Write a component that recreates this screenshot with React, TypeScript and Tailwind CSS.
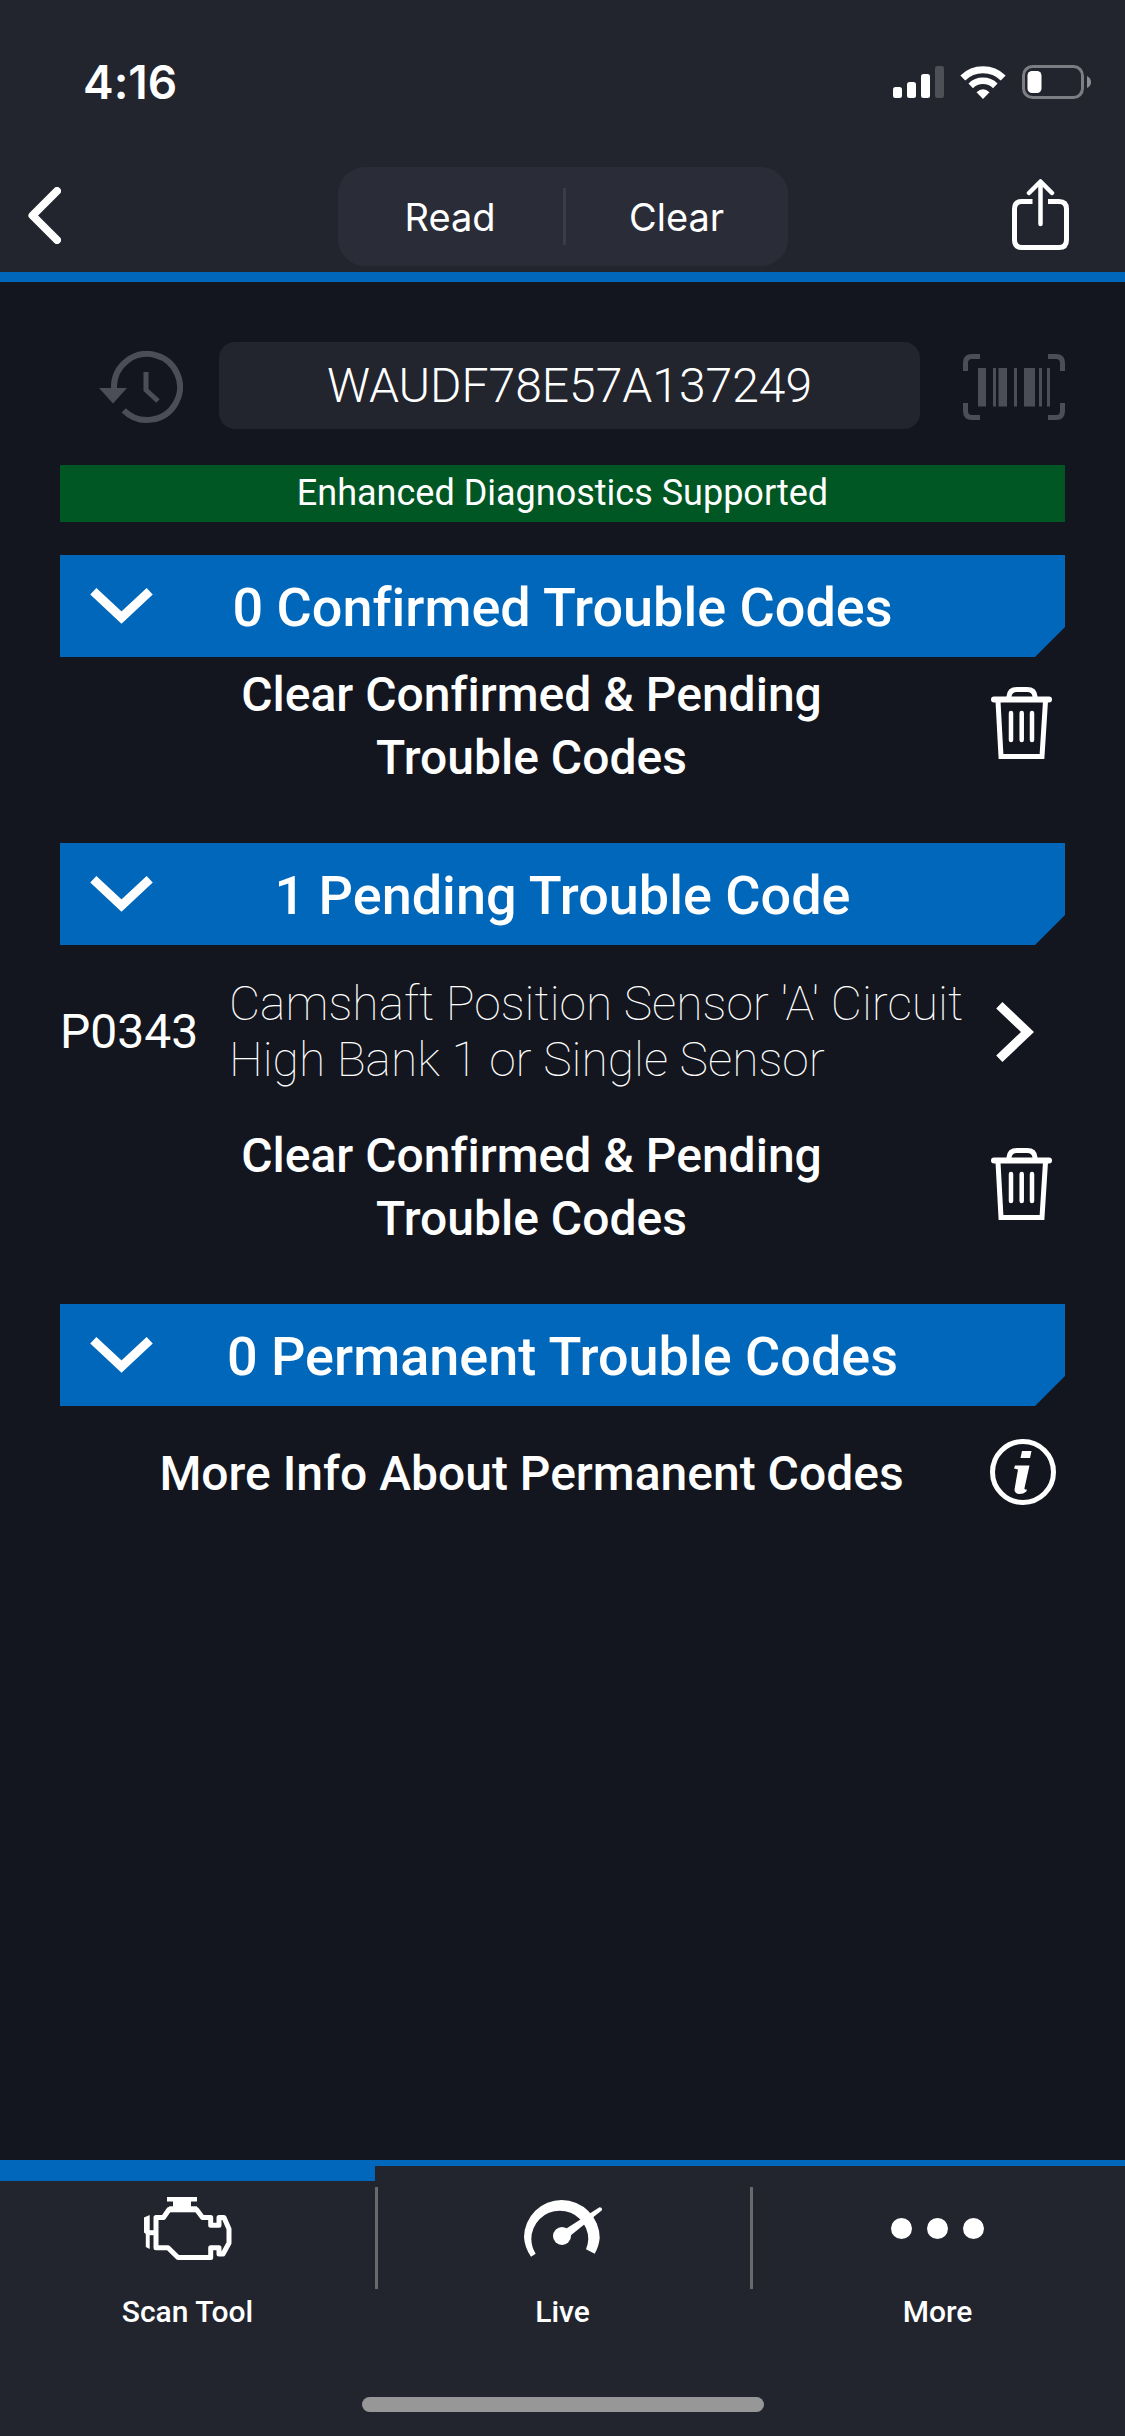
import { useState } from 'react';
import type { ReactNode } from 'react';

const TABS = [
  { id: 'scan', label: 'Scan Tool', icon: <EngineIcon /> },
  { id: 'live', label: 'Live', icon: <GaugeIcon /> },
  { id: 'more', label: 'More', icon: <DotsIcon /> },
];

function EngineIcon() {
  return (
    <svg className="w-[88px] h-[63px]" viewBox="0 0 88 63" fill="none" stroke="currentColor" strokeWidth="5" strokeLinejoin="round">
      <path d="M23 0h30v4.5h-6V11H29V4.5h-6zM0 20.5 5.7 18v34l-3.9-2V37L0 35.5z" fill="currentColor" stroke="none" />
      <path d="M5 35.7h6" />
      <path d="M12 20.5h7.5L25 12.5h27.5L58.5 20.5h8.2v7.7H75V20.5h5L85 32v14l-6 11h-4v-6.3h-8.3v9.8H34L24 50.7H12z" />
      <path d="M25 12.3h28" strokeWidth="6" />
    </svg>
  );
}

function GaugeIcon() {
  return (
    <svg className="w-[78px] h-[57px]" viewBox="0 0 78 57" fill="currentColor">
      <path d="M7 56.7A37.7 37.7 0 0 1 0 37A37.7 37.7 0 0 1 37.7 0A38 38 0 0 1 75.7 38A38 38 0 0 1 70.7 53.7L62 49.3A28.5 28.5 0 0 0 64.3 39A28.5 28.5 0 0 0 35.8 10.7A28.5 28.5 0 0 0 7.3 39A28.5 28.5 0 0 0 11.7 53.7Z" />
      <circle cx="38" cy="36" r="9" />
      <path d="M40 30 75.5 7.3Q79 7.5 77.6 10.5L46 36Z" />
    </svg>
  );
}

function DotsIcon() {
  return (
    <svg className="w-[93px] h-[21px]" viewBox="0 0 93 21" fill="currentColor">
      <circle cx="10.5" cy="10.5" r="10.5" />
      <circle cx="46.5" cy="10.5" r="10.5" />
      <circle cx="82.5" cy="10.5" r="10.5" />
    </svg>
  );
}

function TrashIcon() {
  return (
    <svg className="w-[66px] h-[78px] shrink-0" viewBox="0 0 66 78" fill="none" stroke="currentColor" strokeWidth="5">
      <path d="M19 11V9.5Q19.5 2.5 27 2.5h10q7.500 0 8 7V11" />
      <path d="M4 12.500h55" strokeWidth="6" strokeLinecap="round" />
      <path d="M8 14 11 69.500h41L55.500 14" />
      <path d="M21 26v27M31.700 26v27M42 26v27" strokeWidth="4.500" strokeLinecap="round" />
    </svg>
  );
}

function InfoIcon() {
  return (
    <svg className="w-[66px] h-[68px] shrink-0" viewBox="0 0 66 68">
      <circle cx="33" cy="33" r="30.500" fill="none" stroke="currentColor" strokeWidth="5" />
      <path d="M32 12h9.500l-1.500 7h-9.500zM25 26.500h14.500l-5 22.500q-.3 2 1.500 1.500l.8-.2-.4 2.200q-3 2.500-7 2.500-5.300-.5-4.800-5L28 30.500l-4-1z" fill="currentColor" />
    </svg>
  );
}

function StatusBar() {
  return (
    <div className="flex items-center justify-between h-[134px] pt-[30px] pl-[83px] pr-[34px]">
      <span className="font-[Inter,sans-serif] text-[46px] leading-[54px] font-semibold">4:16</span>
      <div className="flex items-center gap-4">
        <svg className="w-[51px] h-8" viewBox="0 0 51 32" fill="currentColor">
          <rect x="0" y="21" width="9" height="11" rx="2.500" />
          <rect x="14" y="16" width="9" height="16" rx="2.500" />
          <rect x="28" y="8" width="9" height="24" rx="2.500" />
          <rect x="42" y="0" width="9" height="32" rx="2.500" fill="#4e5058" />
        </svg>
        <svg className="w-[46px] h-[33px]" viewBox="0 0 46 33" fill="none" stroke="currentColor" strokeWidth="7">
          <path d="M2.800 11.900A29 29 0 0 1 43.200 11.900" />
          <path d="M10.700 19.800A17.700 17.700 0 0 1 35.300 19.800" strokeWidth="6.500" />
          <path d="M23 33 16.500 26.200Q23 20.500 29.500 26.200Z" fill="currentColor" stroke="none" />
        </svg>
        <svg className="w-[69px] h-[34px]" viewBox="0 0 69 34">
          <rect x="1.500" y="1.500" width="59" height="31" rx="9" fill="none" stroke="#7c7e84" strokeWidth="3" />
          <path d="M65 11q4 2 4 6t-4 6z" fill="#8b8d92" />
          <rect x="5.500" y="6" width="14" height="22" rx="4.500" fill="currentColor" />
        </svg>
      </div>
    </div>
  );
}

function CodeSection({ title, children }: { title: string; children: ReactNode }) {
  const [open, setOpen] = useState(true);
  return (
    <section>
      <h2>
        <button onClick={() => setOpen(!open)} aria-expanded={open}
          className="w-full h-[102px] pl-[30px] flex items-center bg-[#0067bb] [clip-path:polygon(0_0,100%_0,100%_72px,calc(100%-30px)_100%,0_100%)]">
          <svg className="w-[63px] h-9 shrink-0" viewBox="0 0 63 36" fill="none" stroke="currentColor" strokeWidth="9">
            <path d="M3.300 3.300 31.500 29.600 59.700 3.300" />
          </svg>
          <span className="flex-1 mr-[93px] pt-1 text-[54px] leading-[64px] font-medium text-center">{title}</span>
        </button>
      </h2>
      {open && children}
    </section>
  );
}

function ClearButton() {
  return (
    <button className="w-full flex items-center gap-[30px] pt-[6px] pb-[54px] pl-[43px] pr-[9px]">
      <span className="flex-1 text-5xl leading-[63px] font-medium text-center">
        Clear Confirmed &amp; Pending<br />Trouble Codes
      </span>
      <TrashIcon />
    </button>
  );
}

export default function App() {
  const [vin, setVin] = useState('WAUDF78E57A137249');
  const [tab, setTab] = useState('scan');

  return (
    <div className="min-h-screen flex flex-col bg-[#13161e] text-white font-[Roboto,sans-serif] [font-variant-ligatures:none]">
      <header className="bg-[#22252e] border-b-[10px] border-[#0067bb]">
        <StatusBar />
        <div className="grid grid-cols-[1fr_450px_1fr] items-center h-[138px] pt-[27px] pl-7 pr-14">
          <button aria-label="Back" className="justify-self-start pb-0.5">
            <svg className="w-[33px] h-[57px]" viewBox="0 0 33 57" fill="none" stroke="currentColor" strokeWidth="8" strokeLinecap="round" strokeLinejoin="round">
              <path d="M29 4 4.500 28.500 29 53" />
            </svg>
          </button>
          <div className="ml-[14px] w-[450px] h-[99px] flex items-center rounded-[27px] bg-[#2a2d37] font-[Inter,sans-serif] text-[38px] leading-[48px]">
            <button className="w-1/2 h-full">Read</button>
            <span className="w-[3px] h-[57px] bg-[#3a3d46]" />
            <button className="flex-1 h-full">Clear</button>
          </div>
          <button aria-label="Share" className="justify-self-end pb-1">
            <svg className="w-[57px] h-[71px]" viewBox="0 0 57 71" fill="none" stroke="currentColor" strokeWidth="5" strokeLinecap="round" strokeLinejoin="round">
              <path d="M28.500 3v42M17 14 28.500 2.500 40 14" strokeWidth="4.500" />
              <path d="M20.500 22.500H10q-7.500 0-7.500 7.500v31q0 7.500 7.500 7.500h37q7.500 0 7.500-7.500V30q0-7.500-7.500-7.500H36" strokeLinecap="butt" />
            </svg>
          </button>
        </div>
      </header>

      <main className="flex-1 px-[60px] pt-[60px]">
        {/* VIN entry */}
        <div className="flex items-center pl-[39px]">
          <button aria-label="VIN history" className="pt-0.5 text-[#4c4e57]">
            <svg className="w-[84px] h-[72px]" viewBox="0 0 84 72" fill="none" stroke="currentColor" strokeWidth="6">
              <path d="M15 38V36A33 33 0 1 1 24.700 59.300" />
              <path d="M0 37h28L14 52.500z" fill="currentColor" stroke="none" />
              <path d="M47 21v18l12 11" strokeWidth="5" />
            </svg>
          </button>
          <input aria-label="VIN" value={vin} onChange={e => setVin(e.target.value)}
            className="flex-1 min-w-0 h-[87px] ml-9 mr-[43px] rounded-2xl bg-[#22252e] text-5xl font-light text-center focus:outline-none" />
          <button aria-label="Scan VIN barcode" className="pt-0.5 text-[#4c4e57]">
            <svg className="w-[102px] h-[66px]" viewBox="0 0 102 66" fill="none" stroke="currentColor" strokeWidth="5">
              <path d="M2.500 17V9q0-6.500 6.500-6.500h8M85 2.500h8q6.500 0 6.500 6.500v8M99.500 49v8q0 6.500-6.500 6.500h-8M17 63.500H9q-6.500 0-6.500-6.500v-8" />
              <path d="M15 14h8v38.500h-8zM30 14h3v38.500h-3zM35.500 14h8.500v38.500h-8.500zM51 14h3v38.500h-3zM61 14h11v38.500H61zM76 14h3v38.500h-3zM84 14h3v38.500h-3z" fill="currentColor" stroke="none" />
            </svg>
          </button>
        </div>

        <p className="mt-9 mb-[33px] bg-[#005723] text-4xl leading-[57px] text-center">Enhanced Diagnostics Supported</p>

        <CodeSection title="0 Confirmed Trouble Codes">
          <ClearButton />
        </CodeSection>

        <CodeSection title="1 Pending Trouble Code">
          <a href="#p0343" className="flex items-center pt-[31px] pb-[30px] pr-[31px] text-5xl leading-[56px]">
            <span className="w-[169px] shrink-0 leading-[56px]">P0343</span>
            <span className="flex-1 font-thin leading-[56px]">Camshaft Position Sensor 'A' Circuit<br />High Bank 1 or Single Sensor</span>
            <svg className="w-[38px] h-[60px] shrink-0" viewBox="0 0 38 60" fill="none" stroke="currentColor" strokeWidth="9">
              <path d="M3.300 3.300 31.500 30 3.300 56.700" />
            </svg>
          </a>
          <ClearButton />
        </CodeSection>

        <CodeSection title="0 Permanent Trouble Codes">
          <button className="w-full flex items-center gap-[30px] pt-[33px] pl-[43px] pr-[9px]">
            <span className="flex-1 text-5xl leading-[63px] font-medium text-center">More Info About Permanent Codes</span>
            <InfoIcon />
          </button>
        </CodeSection>
      </main>

      <footer className="bg-[#22252e] border-t-[6px] border-[#0067bb] pb-6">
        <nav className="flex">
          {TABS.map((t, i) => (
            <div key={t.id} className="contents">
              {/* divider takes no width, so the tabs stay equal thirds */}
              {i > 0 && <span className="w-[3px] -mr-[3px] h-[102px] mt-[21px] bg-[#696a6d]" />}
              <a href={`#${t.id}`} onClick={() => setTab(t.id)}
                className={`flex-1 flex flex-col items-center pt-4 border-t-[15px] ${tab === t.id ? 'border-[#0067bb]' : 'border-transparent'}`}>
                <span className="h-[63px] flex items-center">{t.icon}</span>
                <span className="mt-[34px] text-3xl leading-9 font-medium">{t.label}</span>
              </a>
            </div>
          ))}
        </nav>
        <div className="w-[402px] h-[15px] mt-[67px] mx-auto rounded-full bg-[#979797]" />
      </footer>
    </div>
  );
}
